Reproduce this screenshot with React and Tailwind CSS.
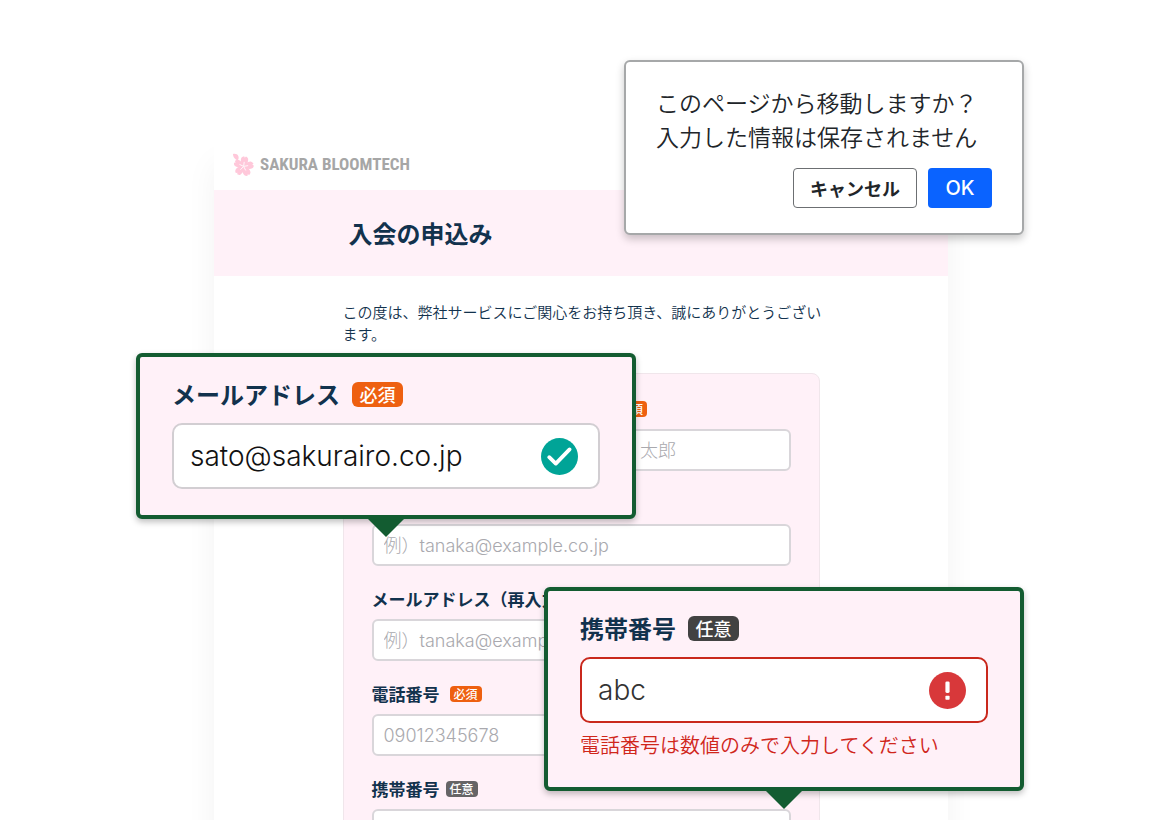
import React from "react";

const petalAngles = [0, 72, 144, 216, 288];

const PetalLogo = () => (
	<svg viewBox="0 0 22 24" className="w-[22px] h-[24px] shrink-0" aria-hidden="true">
		<g fill="#ffc8da" transform="translate(11.6 13.4) rotate(8)">
			{petalAngles.map((angle) => (
				<path key={angle} transform={`rotate(${angle})`} d="M0 0.5C-2.2 -1.6 -4.4 -4.8 -3.4 -8.2C-2.9 -9.5 -1.6 -10 -0.9 -10.2L0 -8.8L0.9 -10.2C1.6 -10 2.9 -9.5 3.4 -8.2C4.4 -4.8 2.2 -1.6 0 0.5Z" />
			))}
		</g>
		<path d="M1 1C3 0.4 5.6 1 6.4 3.2C7 5 6.4 6.4 5.6 7.2C3.2 6.6 1 4.2 1 1Z" fill="#ffc8da" />
		<g stroke="#fff" strokeWidth="0.8" strokeLinecap="round" transform="translate(11.6 13.4) rotate(8)">
			{petalAngles.map((angle) => (
				<path key={angle} transform={`rotate(${angle})`} d="M0 -0.6V-4.2" />
			))}
		</g>
	</svg>
);

const CheckMark = () => (
	<svg viewBox="0 0 37 37" className="w-[37px] h-[37px] shrink-0" aria-hidden="true">
		<circle cx="18.5" cy="18.5" r="18.5" fill="#00a497" />
		<path d="M8.2 19.2L14.8 25.6L28.6 11.4" fill="none" stroke="#fff" strokeWidth="3.8" strokeLinecap="round" strokeLinejoin="round" />
	</svg>
);

const ErrorMark = () => (
	<svg viewBox="0 0 37 37" className="w-[37px] h-[37px] shrink-0" aria-hidden="true">
		<circle cx="18.5" cy="18.5" r="18.5" fill="#d8383a" />
		<rect x="16.4" y="9.4" width="4.2" height="11.6" rx="1.4" fill="#fff" />
		<rect x="16.4" y="23.8" width="4.2" height="4" rx="0.8" fill="#fff" />
	</svg>
);

const Badge = ({ required, large }) => (
	<span
		className={`flex items-center justify-center font-medium text-white leading-none ${
			large ? "w-[51px] h-[25px] rounded-md text-lg" : "w-8 h-4 rounded text-xs"
		} ${required ? "bg-[#ee6010]" : large ? "bg-[#424242]" : "bg-[#666466]"}`}
	>
		{required ? "必須" : "任意"}
	</span>
);

const Field = ({ id, label, required, optional, placeholder, type = "text" }) => (
	<div className="flex flex-col gap-[9px] min-w-0">
		<label
			htmlFor={id}
			className={`flex items-center h-[22px] text-[17px] font-bold text-[#12324d] whitespace-nowrap ${required && label.length > 1 ? "gap-2.5" : "gap-1.5"}`}
		>
			{label}
			{required && <Badge required />}
			{optional && <Badge />}
		</label>
		<input
			id={id}
			type={type}
			placeholder={placeholder}
			className="w-full h-[42px] px-2.5 rounded-md border-2 border-[#d9d6da] bg-white text-lg font-light text-[#333] placeholder:text-[#a9a9ae] outline-none font-['Inter','Noto_Sans_CJK_JP',sans-serif]"
		/>
	</div>
);

const Callout = ({ className, arrowClassName, id, label, required, value, valid, message }) => (
	<section className={`absolute rounded-md border-4 border-[#135c31] bg-[#fff1f8] px-8 pt-6 shadow-[0_3px_6px_rgba(0,0,0,0.25)] ${className}`}>
		<label htmlFor={id} className="flex items-center gap-3 h-[26px] text-2xl font-bold text-[#12324d]">
			{label}
			<Badge required={required} large />
		</label>
		<div className={`mt-4 flex items-center h-[66px] rounded-[10px] border-2 bg-white pl-4 pr-5 ${valid ? "border-[#d2ced2]" : "border-[#c9281c]"}`}>
			<input
				id={id}
				type="text"
				defaultValue={value}
				aria-invalid={!valid}
				className={`flex-1 min-w-0 text-[28px] font-light outline-none font-['Inter','Noto_Sans_CJK_JP',sans-serif] ${valid ? "text-[#111]" : "text-[#333]"}`}
			/>
			{valid ? <CheckMark /> : <ErrorMark />}
		</div>
		{message && <p className="mt-2 text-xl leading-7 font-[350] text-[#d0261b]">{message}</p>}
		<svg viewBox="0 0 38 19" className={`absolute top-full mt-[3px] w-[38px] h-[19px] ${arrowClassName}`} aria-hidden="true">
			<path d="M0 0H38L19 19Z" fill="#135c31" />
		</svg>
	</section>
);

const LeaveDialog = () => (
	<div
		role="dialog"
		aria-labelledby="leave-message"
		className="absolute top-[60px] right-0 w-[400px] rounded-md border-2 border-[#a6a8a9] bg-white px-[30px] pt-[23px] pb-[25px] shadow-[0_4px_8px_rgba(0,0,0,0.22)]"
	>
		<p id="leave-message" className="text-[23px] leading-[34px] font-[350] text-[#212529] whitespace-nowrap">
			このページから移動しますか？
			<br />
			入力した情報は保存されません
		</p>
		<div className="mt-[15px] flex justify-end gap-[11px]">
			<button type="button" className="w-[124px] h-10 rounded border border-[#6c6f72] bg-white text-lg font-bold text-[#212529]">
				キャンセル
			</button>
			<button type="button" className="w-16 h-10 rounded bg-[#0a63ff] text-xl font-medium text-white font-['Inter',sans-serif]">
				OK
			</button>
		</div>
	</div>
);

const EntryForm = () => (
	<div className="bg-white shadow-[0_24px_30px_rgba(0,0,0,0.05)]">
		<header className="flex items-center gap-1.5 h-[51px] pl-[18px]">
			<PetalLogo />
			<span className="text-[17px] font-bold text-[#a6a6a6] font-['Roboto_Condensed','Open_Sans_Condensed','Noto_Sans_CJK_JP',sans-serif]">SAKURA BLOOMTECH</span>
		</header>
		<div className="bg-[#fff1f8]">
			<h1 className="mx-auto max-w-[477px] h-[86px] flex items-center px-1.5 text-2xl font-bold text-[#12324d]">入会の申込み</h1>
		</div>
		<div className="mx-auto max-w-[477px] pt-[25px]">
			<p className="text-[15px] leading-[22px] font-[350] text-[#12324d] -mr-2">
				この度は、弊社サービスにご関心をお持ち頂き、誠にありがとうございます。
			</p>
			<form className="mt-7 flex flex-col gap-[22px] rounded-lg border border-[#f0e6eb] bg-[#fff1f8] px-7 pt-6 pb-8">
				<div className="grid grid-cols-2 gap-[22px]">
					<Field id="family-name" label="姓" required placeholder="例）田中" />
					<Field id="given-name" label="名" required placeholder="例）太郎" />
				</div>
				<Field id="email" label="メールアドレス" required type="email" placeholder="例）tanaka@example.co.jp" />
				<Field id="email-again" label="メールアドレス（再入力）" required type="email" placeholder="例）tanaka@example.co.jp" />
				<Field id="phone" label="電話番号" required type="tel" placeholder="09012345678" />
				<Field id="mobile" label="携帯番号" optional type="tel" />
			</form>
		</div>
	</div>
);

const App = () => (
	<main lang="ja" className="h-screen overflow-hidden bg-white font-['Noto_Sans_CJK_JP',sans-serif]">
		<div className="relative mx-auto w-full max-w-[888px] pt-[139px] pl-[78px] pr-[76px]">
			<EntryForm />
			<LeaveDialog />
			<Callout
				className="top-[353px] left-0 w-[500px] pb-[26px]"
				arrowClassName="left-[227px]"
				id="callout-email"
				label="メールアドレス"
				required
				value="sato@sakurairo.co.jp"
				valid
			/>
			<Callout
				className="top-[587px] right-0 w-[480px] pb-7"
				arrowClassName="left-[217px]"
				id="callout-mobile"
				label="携帯番号"
				value="abc"
				message="電話番号は数値のみで入力してください"
			/>
		</div>
	</main>
);

export default App;
